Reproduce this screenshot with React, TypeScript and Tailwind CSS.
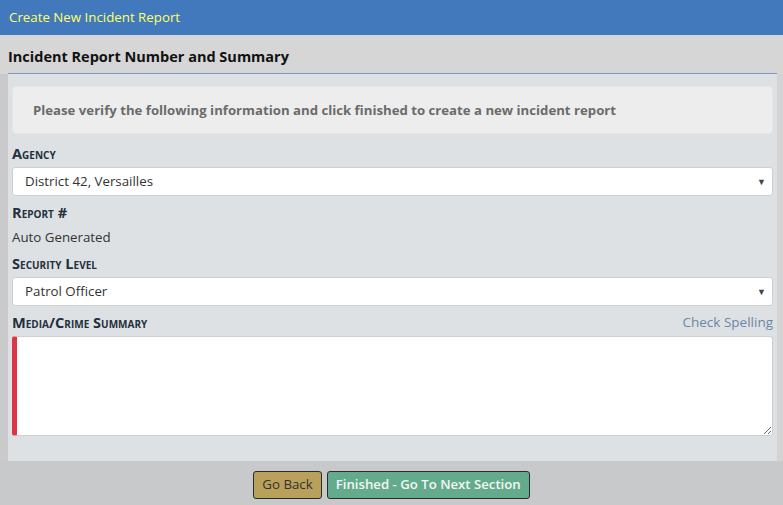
import React from "react";

const font = { fontFamily: '"Open Sans", "Noto Sans", sans-serif' };

function Label({ children }: { children: React.ReactNode }) {
  return (
    <div className="text-[14.6px] font-bold leading-[20px] text-[#24303d] [font-variant:small-caps]">
      {children}
    </div>
  );
}

function FakeSelect({ value }: { value: string }) {
  return (
    <div className="flex h-[29px] items-center justify-between rounded-[3px] border border-[#cfcfcf] bg-white pl-[12px] pr-[6px] text-[13.3px] text-[#333]">
      <span>{value}</span>
      <span className="text-[9px] text-[#444]">▼</span>
    </div>
  );
}

export default function App() {
  return (
    <div className="min-h-[505px] w-[783px] bg-[#c8c9cb]" style={font}>
      {/* top bar */}
      <div className="flex h-[35px] items-center bg-[#4279bd] px-[9px] text-[13.3px] text-[#ffff66]">
        Create New Incident Report
      </div>

      {/* section heading */}
      <div className="bg-[#d6d6d6] px-[8px] pr-[6px]">
        <div className="flex h-[39px] items-end border-b border-[#8395c6] pb-[5px] text-[14.5px] font-bold text-[#111]">
          Incident Report Number and Summary
        </div>
      </div>

      <div className="flex bg-[#d3d3d3]">
        <div className="w-[8px] bg-[#cacacc]" />
        <div className="flex w-[769px] flex-col bg-[#dee1e4] px-[4px] pb-[25px] pt-[12px]">
          <div className="flex h-[48px] items-center rounded-[4px] border border-[#e6e6e6] bg-[#ededed] pl-[20px] pt-[1px] text-[13.2px] font-bold text-[#6b6b6b]">
            Please verify the following information and click finished to create a new incident report
          </div>

          <div className="mt-[9px]">
            <Label>Agency</Label>
          </div>
          <div className="mt-[4px]">
            <FakeSelect value="District 42, Versailles" />
          </div>

          <div className="mt-[6px]">
            <Label>Report #</Label>
          </div>
          <div className="mt-[5px] text-[13.3px] leading-[20px] text-[#333]">Auto Generated</div>

          <div className="mt-[6px]">
            <Label>Security Level</Label>
          </div>
          <div className="mt-[4px]">
            <FakeSelect value="Patrol Officer" />
          </div>

          <div className="mt-[6px] flex items-center justify-between">
            <Label>Media/Crime Summary</Label>
            <span className="text-[13.5px] text-[#6a87a6]">Check Spelling</span>
          </div>
          <textarea
            className="mt-[4px] h-[100px] w-full rounded-[3px] border border-l-[5px] border-[#cfcfcf] border-l-[#dc3545] bg-white outline-none"
            defaultValue=""
          />
        </div>
        <div className="flex-1" />
      </div>

      {/* buttons */}
      <div className="flex justify-center gap-[5px] pt-[10px]">
        <button className="h-[28px] rounded-[3px] border border-[#2b2b2b] bg-[#b9a05b] px-[8px] text-[13.3px] text-[#333]">
          Go Back
        </button>
        <button className="h-[28px] rounded-[3px] border border-[#2b2b2b] bg-[#63ab8c] px-[8px] text-[13.2px] font-semibold text-[#f4f7f4]">
          Finished - Go To Next Section
        </button>
      </div>
    </div>
  );
}
